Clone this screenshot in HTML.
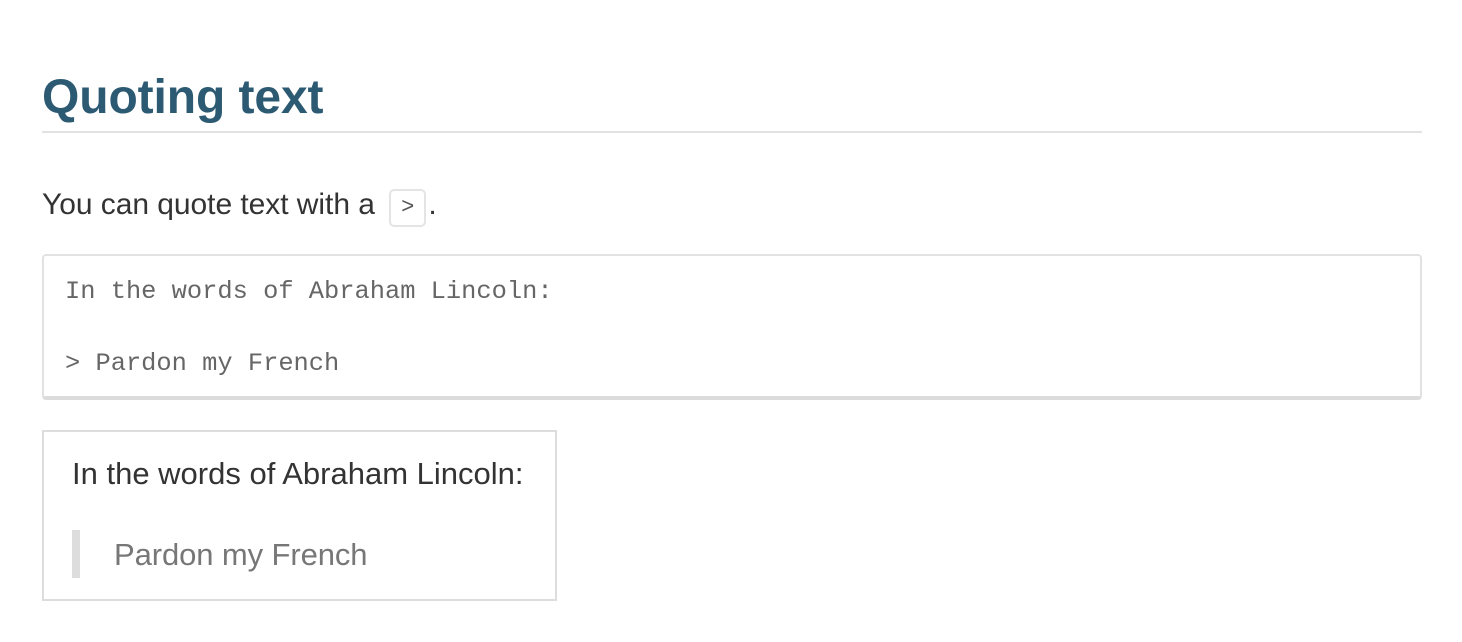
<!DOCTYPE html>
<html><head><meta charset="utf-8"><style>
html,body{margin:0;padding:0;background:#fff;width:1462px;height:642px;overflow:hidden}
body{font-family:"Liberation Sans",sans-serif;position:relative}
h1{position:absolute;left:42px;top:68px;margin:0;font-size:48px;font-weight:bold;color:#2d5a73;line-height:60px;letter-spacing:-0.1px}
.hr{position:absolute;left:42px;top:131px;width:1380px;height:2px;background:#e2e2e2}
p{position:absolute;left:42px;top:187px;margin:0;font-size:30px;line-height:36px;color:#333;letter-spacing:-0.05px}
code{display:inline-block;font-family:"Liberation Mono",monospace;font-size:22px;color:#555;border:2px solid #e4e4e4;border-radius:5px;padding:0 10px;line-height:34px;vertical-align:1px;margin:0 2px 0 6px}
.pre{position:absolute;left:42px;top:254px;width:1376px;height:140px;border:2px solid #e2e2e2;border-bottom:4px solid #dcdcdc;border-radius:4px;font-family:"Liberation Mono",monospace;font-size:25.4px;color:#666;line-height:36px;white-space:pre;padding:0;box-sizing:content-box}
.pre div{position:absolute;left:21px}
.box{position:absolute;left:42px;top:430px;width:511px;height:167px;border:2px solid #ddd}
.t1{position:absolute;left:28px;top:24px;font-size:31px;color:#333;letter-spacing:0}
.bar{position:absolute;left:28px;top:98px;width:8px;height:48px;background:#ddd}
.t2{position:absolute;left:70px;top:105px;font-size:31px;color:#777;letter-spacing:-0.1px}
</style></head><body>
<h1>Quoting text</h1>
<div class="hr"></div>
<p>You can quote text with a <code>&gt;</code>.</p>
<div class="pre"><div style="top:18px">In the words of Abraham Lincoln:</div><div style="top:90px">&gt; Pardon my French</div></div>
<div class="box"><div class="t1">In the words of Abraham Lincoln:</div><div class="bar"></div><div class="t2">Pardon my French</div></div>
</body></html>
